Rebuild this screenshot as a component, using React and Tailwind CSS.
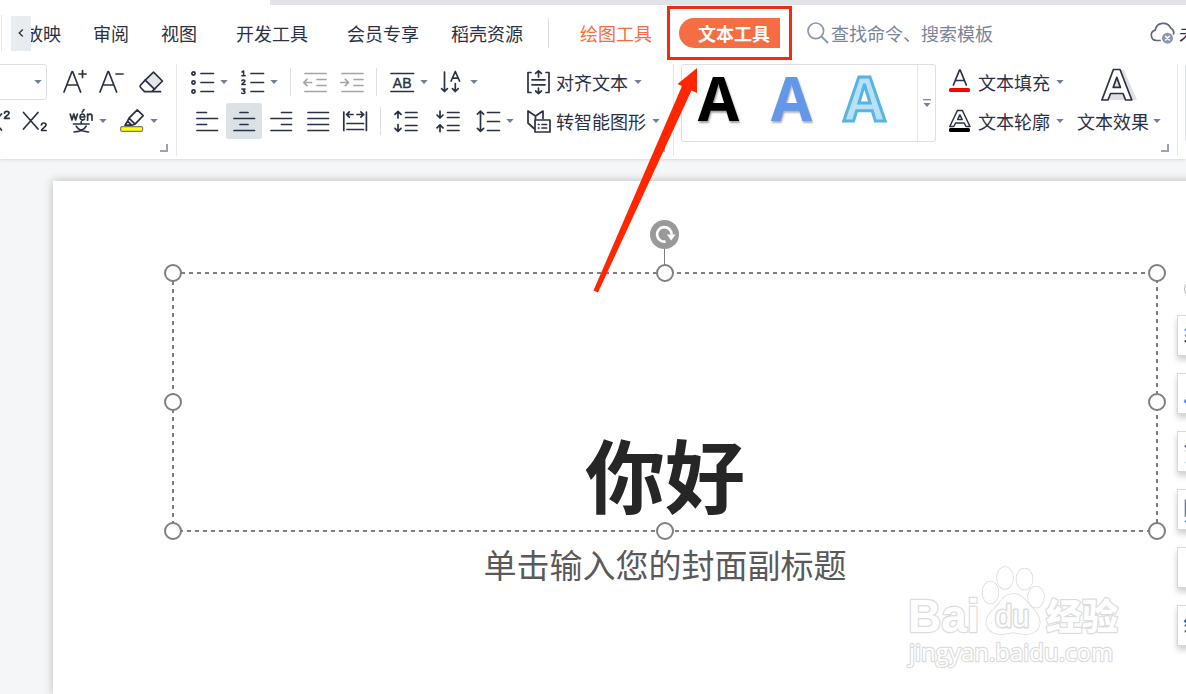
import React from "react";

function Icon({ children, className = "text-[#2b3144]" }) {
  return (
    <svg
      viewBox="0 0 24 24"
      aria-hidden="true"
      className={`h-6 w-6 shrink-0 overflow-visible ${className}`}
      fill="none"
      stroke="currentColor"
      strokeWidth="1.7"
      strokeLinecap="round"
      strokeLinejoin="round"
    >
      {children}
    </svg>
  );
}

function Caret() {
  return (
    <svg viewBox="0 0 8 4" aria-hidden="true" className="h-1 w-2 shrink-0">
      <path d="M0.3 0H7.7L4 4Z" fill="#6f7f98" />
    </svg>
  );
}

function IconButton({ label, children, active = false }) {
  return (
    <button
      aria-label={label}
      aria-pressed={active}
      className={`flex h-9 w-9 shrink-0 items-center justify-center rounded-[3px] ${active ? "bg-[#dce1e6]" : ""}`}
    >
      {children}
    </button>
  );
}

function DropButton({ label, children }) {
  return (
    <button aria-label={label} className="flex h-9 shrink-0 items-center gap-1.5 px-1.5">
      {children}
      <Caret />
    </button>
  );
}

function TextDropButton({ text, children }) {
  return (
    <button className="flex h-9 shrink-0 items-center gap-1.5 px-1.5 text-lg leading-6 whitespace-nowrap">
      {children}
      <span>{text}</span>
      <Caret />
    </button>
  );
}

function Divider() {
  return <span className="h-7 w-px shrink-0 bg-[#dcdfe4]" />;
}

function Launcher({ label }) {
  return (
    <button aria-label={label} className="absolute right-2 bottom-1 h-2 w-2 border-r-2 border-b-2 border-[#96a3bb]" />
  );
}

const tabs = [
  { name: "审阅", space: "ml-8" },
  { name: "视图", space: "ml-8" },
  { name: "开发工具", space: "ml-[39px]" },
  { name: "会员专享", space: "ml-[39px]" },
  { name: "稻壳资源", space: "ml-8" },
];

function TabBar() {
  return (
    <nav className="flex h-14 items-center text-lg leading-6 whitespace-nowrap">
      <span className="ml-px h-9 w-px shrink-0 bg-[#e3e5e9]" />
      <button aria-label="向左滚动" className="ml-[9px] flex h-[35px] w-5 shrink-0 items-center justify-center bg-[#e8ebef]">
        <svg viewBox="0 0 6 8" className="h-2 w-1.5" fill="none" stroke="#2b3144" strokeWidth="1.3">
          <path d="M4.8 0.5L1.2 4L4.8 7.5" />
        </svg>
      </button>
      <div className="flex shrink-0 overflow-hidden">
        <button className="-ml-1.5">放映</button>
      </div>
      {tabs.map((t) => (
        <button key={t.name} className={`shrink-0 ${t.space}`}>
          {t.name}
        </button>
      ))}
      <span className="ml-[25px] h-[30px] w-px shrink-0 bg-[#dcdfe4]" />
      <button className="ml-[31px] shrink-0 text-[#f46d43]">绘图工具</button>
      <div className="relative ml-[27px] shrink-0">
        <button className="h-[30px] rounded-l-full rounded-r-lg bg-[#f56e43] pr-2.5 pl-[19px] font-bold text-white">
          文本工具
        </button>
        <span className="pointer-events-none absolute -inset-3 border-3 border-[#f22a10]" />
      </div>
      <label className="ml-[27px] flex min-w-0 flex-1 items-center gap-0.5">
        <svg viewBox="0 0 22 22" className="h-[22px] w-[22px] shrink-0" fill="none" stroke="#8b97b1" strokeWidth="1.7">
          <circle cx="8.8" cy="8.8" r="7.8" />
          <path d="M14.4 14.4L21 21" strokeWidth="2" />
        </svg>
        <input
          aria-label="查找命令、搜索模板"
          placeholder="查找命令、搜索模板"
          className="w-full min-w-0 outline-none placeholder:text-[#7a859c]"
        />
      </label>
      <button className="-mr-[11px] flex shrink-0 items-center gap-[3px]">
        <svg viewBox="0 0 26 24" className="h-6 w-[26px] overflow-visible" fill="none" stroke="#5d6780" strokeWidth="1.7" strokeLinecap="round">
          <path d="M10 19.5H6.5A5.3 5.3 0 0 1 5.2 9.1A8.2 8.2 0 0 1 20.6 6.9A5.8 5.8 0 0 1 23.6 13" />
          <circle cx="17.5" cy="17.2" r="5.5" fill="#8b97b1" stroke="none" />
          <path d="M15.7 15.4L19.3 19M19.3 15.4L15.7 19" stroke="#fff" strokeWidth="1.5" />
        </svg>
        <span>未</span>
      </button>
    </nav>
  );
}

function FontGroup() {
  return (
    <section className="relative flex w-[177px] shrink-0 flex-col gap-[3px] border-r border-[#e6e8ec]">
      <div className="flex">
        <label className="relative -ml-2 flex h-9 w-[55px] shrink-0 items-center rounded-[3px] border border-[#dcdfe4]">
          <select aria-label="字号" className="h-full w-full appearance-none outline-none" />
          <span className="pointer-events-none absolute right-1 flex">
            <Caret />
          </span>
        </label>
        <div className="ml-2.5 flex">
          <IconButton label="增大字号">
            <Icon>
              <path d="M1 22L9 1.5H9.6L17.6 22M4 15H14.6M19.5 0.5V7.5M16 4H23" />
            </Icon>
          </IconButton>
          <IconButton label="减小字号">
            <Icon>
              <path d="M1 22L9 1.5H9.6L17.6 22M4 15H14.6M17 4H24" />
            </Icon>
          </IconButton>
        </div>
        <div className="ml-1">
          <IconButton label="清除格式">
            <Icon>
              <path d="M14.5 2.2L23.4 11L15.4 19.2L6.2 10.2Z" fill="#e4e6e8" />
              <path d="M6.2 10.2L1.6 15C0.7 16 0.7 16.6 1.6 17.5L5.5 21.7H21.5M15.4 19.2L12.8 21.7" />
            </Icon>
          </IconButton>
        </div>
      </div>
      <div className="-ml-5 flex gap-px">
        <IconButton label="上标">
          <Icon>
            <path d="M1 5L15.5 21M15.5 5L1 21M18.5 4.2C18.5 1.7 23 1.7 23 4.2C23 6 18.5 7.6 18.5 9.4H23.2" />
          </Icon>
        </IconButton>
        <IconButton label="下标">
          <Icon>
            <path d="M0.5 3.5L15 20M15 3.5L0.5 20M18.5 16C18.5 13.3 23 13.3 23 16C23 18 18.5 19.6 18.5 21.5H23.2" />
          </Icon>
        </IconButton>
        <span className="w-2" />
        <DropButton label="拼音指南">
          <Icon>
            <path d="M1.2 5L3 11L4.8 5L6.6 11L8.4 5M11 8H15.8C15.8 4 11 4 11 8C11 11.4 14 11.6 15.5 10.2M13.2 3L15 0.6M18.6 11.2V5M18.6 7C19.6 4.4 23 4.6 23 7.4V11.2" />
            <path d="M4.5 15H20M12.2 12.8V15M7.2 17.2C9 20.5 13 22.6 19.5 23M17.2 17.2C15.4 20.5 11.6 22.6 5 23" />
          </Icon>
        </DropButton>
        <DropButton label="突出显示">
          <Icon>
            <path d="M9 9.2L17.3 0.8L23.2 6.6L15 15.2ZM9 9.2L7.6 12.2L11.6 16.2L15 15.2M7.6 12.2L5 16.2H11.6" />
            <rect x="0.6" y="17.6" width="22" height="4.8" rx="1.5" fill="#ffff00" stroke="#7d7d6a" strokeWidth="1.2" />
          </Icon>
        </DropButton>
      </div>
      <Launcher label="字体设置" />
    </section>
  );
}

function ParagraphGroup() {
  return (
    <section className="relative flex w-[497px] shrink-0 flex-col gap-[3px] border-r border-[#e6e8ec]">
      <div className="flex items-center pl-[7px]">
        <DropButton label="项目符号">
          <Icon>
            <circle cx="3.5" cy="3.5" r="1.6" />
            <circle cx="3.5" cy="12.5" r="1.6" />
            <circle cx="3.5" cy="21.5" r="1.6" />
            <path d="M11 3.5H23.5M11 12.5H23.5M11 21.5H23.5" />
          </Icon>
        </DropButton>
        <DropButton label="编号">
          <Icon>
            <path d="M2 2L3.6 1V5.6M1.8 5.8H5.2M1.8 10.8C2.2 9.6 5 9.6 5 11C5 12.2 1.8 13 1.8 14.6H5.2M1.8 19H5L3.4 21C5.6 21 5.6 23.6 3.4 23.6C2.6 23.6 2 23.4 1.6 23" strokeWidth="1.5" />
            <path d="M11 3.5H23.5M11 12.5H23.5M11 21.5H23.5" />
          </Icon>
        </DropButton>
        <div className="ml-1.5 flex items-center">
          <Divider />
          <div className="mx-1.5 flex gap-px">
            <IconButton label="减少缩进">
              <Icon className="text-[#a3a5aa]">
                <path d="M2 3.5H23M14 9.5H23M14 15.5H23M2 21.5H23M0.8 12.5H8.5M4 9.3L0.8 12.5L4 15.7" />
              </Icon>
            </IconButton>
            <IconButton label="增加缩进">
              <Icon className="text-[#a3a5aa]">
                <path d="M2 3.5H23M14 9.5H23M14 15.5H23M2 21.5H23M0.8 12.5H8.5M5.3 9.3L8.5 12.5L5.3 15.7" />
              </Icon>
            </IconButton>
          </div>
          <Divider />
        </div>
        <div className="ml-[7px] flex">
          <DropButton label="字符间距">
            <Icon>
              <path d="M1 3.5H23.5M1 21.5H23.5" />
              <text x="12.2" y="17.6" textAnchor="middle" fontFamily="Liberation Sans" fontSize="14" fill="currentColor" strokeWidth="0.4">AB</text>
            </Icon>
          </DropButton>
          <DropButton label="文字方向">
            <Icon>
              <path d="M4.500 2V21.5M1.600 18.6L4.500 21.5L7.400 18.6M15.300 13.500V21.5M12.400 18.6L15.300 21.5L18.200 18.6M11.100 11L15.300 1.500L19.500 11M12.500 8.2H18.100" />
            </Icon>
          </DropButton>
        </div>
        <div className="ml-9">
          <TextDropButton text="对齐文本">
            <Icon>
              <path d="M5 2.5H2V22.5H5M20 2.5H23V22.5H20M6 9.8H19M6 14.8H19M12.5 7V0.8M9.6 3.4L12.5 0.8L15.4 3.4M12.5 18V23.6M9.6 21L12.5 23.6L15.4 21" />
            </Icon>
          </TextDropButton>
        </div>
      </div>
      <div className="flex items-center pl-3">
        <div className="mr-[7px] flex gap-px">
          <IconButton label="左对齐">
            <Icon>
              <path d="M2 3.5H11.5M2 9.5H22.5M2 15.5H11.5M2 21.5H22.5" />
            </Icon>
          </IconButton>
          <IconButton label="居中对齐" active>
            <Icon>
              <path d="M8 3.5H16M2 9.5H22.5M8 15.5H16M2 21.5H22.5" />
            </Icon>
          </IconButton>
          <IconButton label="右对齐">
            <Icon>
              <path d="M12.5 3.5H22.5M2 9.5H22.5M12.5 15.5H22.5M2 21.5H22.5" />
            </Icon>
          </IconButton>
          <IconButton label="两端对齐">
            <Icon>
              <path d="M2 3.5H22.5M2 9.5H22.5M2 15.5H22.5M2 21.5H22.5" />
            </Icon>
          </IconButton>
          <IconButton label="分散对齐">
            <Icon>
              <path d="M0.8 3V21.5M23.4 3V21.5M4 14.5H20.5M4 20.5H20.5M3.5 5.5H10M6.3 2.8L3.5 5.5L6.3 8.2M14 5.5H20.7M17.9 2.8L20.7 5.5L17.9 8.2" />
            </Icon>
          </IconButton>
        </div>
        <Divider />
        <div className="ml-[7px] flex gap-1.5">
          <IconButton label="增大段落间距">
            <Icon>
              <path d="M11.5 3.5H23M11.5 8.5H23M11.5 16.5H23M11.5 21.5H23M4 9V2.4M1 5.4L4 2.4L7 5.4M4 15.5V22.4M1 19.4L4 22.4L7 19.4" />
            </Icon>
          </IconButton>
          <IconButton label="减小段落间距">
            <Icon>
              <path d="M11.5 3.5H23M11.5 8.5H23M11.5 16.5H23M11.5 21.5H23M4 2.2V9M1 6L4 9L7 6M4 22.6V15.8M1 18.8L4 15.8L7 18.8" />
            </Icon>
          </IconButton>
        </div>
        <div className="ml-1 flex">
          <DropButton label="行距">
            <Icon>
              <path d="M11.5 3.5H23.5M11.5 12.5H23.5M11.5 21.5H23.5M4.5 2.2V22.4M1.4 5.2L4.5 2.2L7.6 5.2M1.4 19.4L4.5 22.4L7.6 19.4" />
            </Icon>
          </DropButton>
          <TextDropButton text="转智能图形">
            <Icon>
              <path d="M17 9.5V2L9.5 7L2 2V14L8 19.5M9.5 7V10.5" />
              <rect x="9" y="11" width="15" height="12" fill="#fff" />
              <path d="M12.4 15.5H13M16 15.5H20.6M12.4 19H13M16 19H20.6" />
            </Icon>
          </TextDropButton>
        </div>
      </div>
      <Launcher label="段落设置" />
    </section>
  );
}

const presets = [
  { name: "黑色填充", style: "text-black [text-shadow:1px_2px_2px_#00000060]" },
  { name: "蓝色填充", style: "text-[#6397e8] [text-shadow:1px_2px_2px_#00000050]" },
  { name: "浅蓝轮廓", style: "text-[#b9e1f6] [-webkit-text-stroke:3px_#56b5e4]" },
];

function TextStyleGroup() {
  return (
    <section className="relative flex w-[504px] shrink-0 items-start border-r border-[#e6e8ec] pl-[7px]">
      <div className="flex h-[78px] w-[255px] shrink-0 justify-between rounded-[3px] border border-[#dcdfe4]">
        <div className="flex">
          {presets.map((p) => (
            <button
              key={p.name}
              aria-label={p.name}
              className={`flex w-[73px] items-start justify-center font-['Open_Sans',sans-serif] text-[60px] leading-[66px] font-bold ${p.style}`}
            >
              A
            </button>
          ))}
        </div>
        <button aria-label="更多样式" className="flex w-[18px] items-center justify-center border-l border-[#e6e8ec]">
          <svg viewBox="0 0 8 8" className="h-2 w-2">
            <path d="M0 0.7H8" stroke="#6f7f98" strokeWidth="1.2" />
            <path d="M0.5 4H7.5L4 8Z" fill="#6f7f98" />
          </svg>
        </button>
      </div>
      <div className="ml-1.5 flex shrink-0 flex-col gap-[3px]">
        <TextDropButton text="文本填充">
          <Icon>
            <path d="M5.4 15L11.500 0H12.200L18.300 15M7.600 10.500H16" />
            <rect x="1" y="18" width="21" height="4" rx="1.5" fill="#ff0000" stroke="none" />
          </Icon>
        </TextDropButton>
        <TextDropButton text="文本轮廓">
          <Icon>
            <path d="M1.8 17.5L9.4 1.5H14.4L22 17.5H18L16.2 14H7.6L5.8 17.5ZM9.6 10.5L11.9 5.8L14.2 10.5Z" strokeWidth="1.5" />
            <rect x="1" y="19" width="21" height="4" rx="1.5" fill="#000" stroke="none" />
          </Icon>
        </TextDropButton>
      </div>
      <button className="ml-px flex shrink-0 flex-col px-1.5 pt-1 text-lg leading-6 whitespace-nowrap">
        <svg viewBox="0 0 38 34" className="ml-6 h-[34px] w-[38px]" strokeLinejoin="round">
          <path d="M8 32L18 2H23L36 32Z" fill="#dfdfe1" />
          <path d="M0.9 32L12.4 1.5H19L30.8 32H24.6L22 25.5H9.6L7 32ZM12.2 19.4H19.4L15.8 9.4Z" fill="#fff" fillRule="evenodd" stroke="#2b3144" strokeWidth="1.7" />
        </svg>
        <span className="mt-[7px] flex items-center gap-1">
          文本效果
          <Caret />
        </span>
      </button>
      <Launcher label="文本效果设置" />
    </section>
  );
}

function Handle({ place }) {
  return <span className={`absolute h-[18px] w-[18px] rounded-full border-2 border-[#7f7f7f] bg-white ${place}`} />;
}

const handles = [
  "-top-2 -left-2",
  "-top-2 left-[calc(50%-9px)]",
  "-top-2 -right-2",
  "top-[calc(50%-9px)] -left-2",
  "top-[calc(50%-9px)] -right-2",
  "-bottom-2 -left-2",
  "-bottom-2 left-[calc(50%-9px)]",
  "-bottom-2 -right-2",
];

function TitleBox() {
  return (
    <div className="relative mx-[119px] mt-[91px] flex h-[260px] items-end justify-center pb-5">
      <svg className="absolute inset-0 h-full w-full" aria-hidden="true">
        <svg x="1" y="1" width="100%" height="100%" overflow="visible">
          <line x1="0" y1="0" x2="100%" y2="0" stroke="#7f7f7f" strokeWidth="2" strokeDasharray="4 4" />
          <line x1="0" y1="0" x2="0" y2="100%" stroke="#7f7f7f" strokeWidth="2" strokeDasharray="4 4" />
        </svg>
        <svg x="-1" y="-1" width="100%" height="100%" overflow="visible">
          <line x1="0" y1="100%" x2="100%" y2="100%" stroke="#7f7f7f" strokeWidth="2" strokeDasharray="4 4" />
          <line x1="100%" y1="0" x2="100%" y2="100%" stroke="#7f7f7f" strokeWidth="2" strokeDasharray="4 4" />
        </svg>
      </svg>
      <span className="absolute -top-6 left-1/2 -ml-px h-6 w-px bg-[#7f7f7f]" />
      <svg viewBox="0 0 29 29" className="absolute -top-[52px] left-[calc(50%-15px)] h-[29px] w-[29px]" aria-hidden="true">
        <circle cx="14.5" cy="14.5" r="14.5" fill="#999" />
        <path d="M15.6 21.6A7.3 7.3 0 1 1 21.7 14.5" fill="none" stroke="#fff" strokeWidth="2.7" />
        <path d="M16.8 14.4H25.6L21.2 20.4Z" fill="#fff" />
      </svg>
      <h1 className="relative text-[80px] leading-[80px] font-bold text-[#262626]">你好</h1>
      {handles.map((h) => (
        <Handle key={h} place={h} />
      ))}
    </div>
  );
}

const sideTools = [
  {
    name: "布局",
    art: (
      <>
        <path d="M7 14.5H20" stroke="#4a86e8" />
        <path d="M7 20.5H20" stroke="#999" />
        <path d="M7 26.5H20" stroke="#222" />
      </>
    ),
  },
  { name: "填充", art: <path d="M7 30L14 22" stroke="#4a86e8" strokeWidth="3" /> },
  {
    name: "文字",
    art: (
      <>
        <path d="M7 15H20" stroke="#444860" />
        <path d="M8 20H12" stroke="#999" />
        <path d="M8 32H20" stroke="#5aa9e6" />
      </>
    ),
  },
  {
    name: "形状",
    art: (
      <>
        <path d="M8 10V28" stroke="#777b88" />
        <path d="M7 33H20" stroke="#4a86e8" />
      </>
    ),
  },
  { name: "图层", art: null },
  {
    name: "更多",
    art: (
      <>
        <path d="M7 17L12 12" stroke="#2d5fa8" strokeWidth="3" />
        <path d="M7 20.5H20M7 26.5H20" stroke="#555" />
      </>
    ),
  },
];

function SideTools() {
  return (
    <aside className="absolute top-[121px] -right-8 flex flex-col gap-[17px]">
      <button aria-label="收起" className="ml-[7px] h-[18px] w-[18px] rounded-full border border-[#b5b5b5] bg-white" />
      {sideTools.map((t) => (
        <button key={t.name} aria-label={t.name} className="h-[41px] w-[41px] border border-[#d8d9dc] bg-white shadow-[0_4px_6px_#00000030]">
          <svg viewBox="0 0 41 41" className="h-full w-full" fill="none" strokeWidth="2">
            {t.art}
          </svg>
        </button>
      ))}
    </aside>
  );
}

function Watermark() {
  return (
    <svg
      viewBox="0 0 220 104"
      className="pointer-events-none absolute right-[60px] bottom-6 h-[104px] w-[220px] overflow-visible"
      fill="#fff"
      stroke="#dcdcdc"
      strokeWidth="2.4"
      strokeLinejoin="round"
      paintOrder="stroke"
    >
      <text x="2" y="66" fontFamily="Liberation Sans" fontWeight="700" fontSize="46">Bai</text>
      <ellipse cx="75.500" cy="26.500" rx="8" ry="11" transform="translate(9 0)" strokeWidth="1.6" />
      <ellipse cx="99" cy="12" rx="8" ry="11" strokeWidth="1.6" />
      <ellipse cx="118.500" cy="13" rx="8" ry="10.500" strokeWidth="1.6" />
      <ellipse cx="130" cy="31" rx="8" ry="10.500" strokeWidth="1.6" />
      <path d="M107 28C97 28 95 37 88 43C76 53 79 67 93 68C100 68.500 102 66.500 107 66.500C112 66.500 115 68.500 121 68C134 67 138 55 128 44C121 37 117 28 107 28Z" strokeWidth="1.6" />
      <text x="89" y="61" fontFamily="Liberation Sans" fontSize="31" strokeWidth="3">du</text>
      <text x="140" y="64" fontFamily="Noto Sans CJK SC" fontWeight="900" fontSize="36">经验</text>
      <text x="3" y="95" fontFamily="Open Sans" fontWeight="500" fontSize="24">jingyan.baidu.com</text>
    </svg>
  );
}

export default function App() {
  return (
    <div className="relative flex min-h-screen flex-col overflow-hidden bg-[#f5f6f8] font-['Noto_Sans_CJK_SC',sans-serif] text-[#2b3144]">
      <header className="relative z-10 bg-white shadow-[0_0_4px_#00000030]">
        <div className="ml-[270px] h-[5px] bg-[#e1e3e8]" />
        <TabBar />
        <div className="flex h-[98px] overflow-hidden py-[3px]">
          <FontGroup />
          <ParagraphGroup />
          <TextStyleGroup />
          <div className="ml-[7px] h-[78px] w-10 shrink-0 rounded-[3px] border border-[#dcdfe4]" />
        </div>
      </header>
      <main className="relative flex flex-1 pt-[22px] pl-[53px]">
        <div className="-mr-[91px] flex-1 bg-white shadow-[0_0_9px_#00000040]">
          <TitleBox />
          <p className="mt-3 text-center text-[33px] leading-10 text-[#595959]">单击输入您的封面副标题</p>
        </div>
        <SideTools />
        <Watermark />
      </main>
      <svg viewBox="0 0 106 226" aria-hidden="true" className="pointer-events-none absolute top-[67px] left-[592px] z-20 h-[226px] w-[106px]">
        <path d="M105 1L105 26L99.500 23.500L6 225.500L1.500 223.500L90 19L85.500 17Z" fill="#ff2600" />
      </svg>
    </div>
  );
}
